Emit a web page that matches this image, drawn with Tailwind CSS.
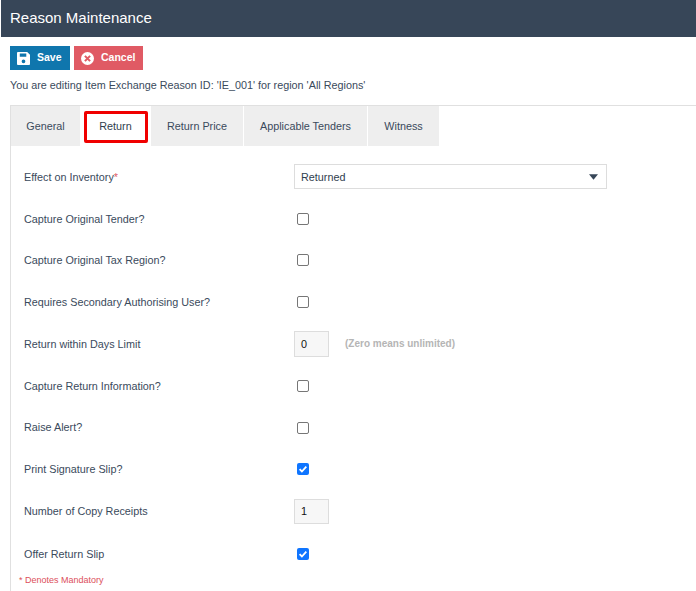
<!DOCTYPE html>
<html lang="en">
<head>
  <meta charset="UTF-8" />
  <title>Reason Maintenance</title>
  <script src="https://cdn.jsdelivr.net/npm/@tailwindcss/browser@4"></script>
</head>
<body class="bg-white text-[#3a4a5c] font-['Liberation_Sans',Arial,sans-serif] h-[591px] overflow-hidden">

  <header class="h-[37px] ml-px bg-[#374658] text-white text-[15px] flex items-center pl-[9px]">Reason Maintenance</header>

  <div class="flex gap-1 pl-[10px] mt-[9px]">
    <button class="h-6 w-[60px] bg-[#0f76ad] text-white text-[10.5px] font-bold flex items-center pl-[7px] gap-[7px]">
      <svg class="w-[13px] h-[13px]" viewBox="0 0 14 14"><path fill="#fff" fill-rule="evenodd" d="M1 0h10l3 3v10a1 1 0 0 1-1 1H1a1 1 0 0 1-1-1V1a1 1 0 0 1 1-1zM3 1.5V5h7V1.5zM7 8a2 2 0 1 0 0 4 2 2 0 0 0 0-4z"/></svg>
      Save
    </button>
    <button class="h-6 w-[69px] bg-[#e05a64] text-white text-[10.5px] font-bold flex items-center pl-[7px] gap-[7px]">
      <svg class="w-[13px] h-[13px]" viewBox="0 0 14 14"><circle cx="7" cy="7" r="7" fill="#fff"/><path d="M4.2 4.2l5.6 5.6M9.8 4.2l-5.6 5.6" stroke="#e05a64" stroke-width="2.2"/></svg>
      Cancel
    </button>
  </div>

  <p class="text-[10.8px] mt-2 ml-[10px] h-[14px] leading-[14px] whitespace-nowrap">You are editing Item Exchange Reason ID: 'IE_001' for region 'All Regions'</p>

  <div class="ml-[10px] mt-[13px] border-t border-l border-[#e0e0e0] h-[486px]">
    <nav class="flex gap-px text-[10.8px] h-10">
      <a class="w-[69px] bg-[#eeeeee] flex items-center justify-center">General</a>
      <a class="relative w-[69px] bg-white text-[#2f3e4e] flex items-center justify-center">
        Return
        <span class="absolute left-[3px] top-[5px] w-[64px] h-[32px] border-[3px] border-[#f00000] rounded-[2px]"></span>
      </a>
      <a class="w-[92px] bg-[#eeeeee] flex items-center justify-center">Return Price</a>
      <a class="w-[123px] bg-[#eeeeee] flex items-center justify-center">Applicable Tenders</a>
      <a class="w-[71px] bg-[#eeeeee] flex items-center justify-center">Witness</a>
    </nav>

    <div class="pt-[10px] pl-[13px] text-[10.8px]">
      <div class="flex items-center h-[41.78px]">
        <label class="w-[270px]">Effect on Inventory<span class="text-[#e05a64]">*</span></label>
        <div class="w-[313px] h-[25px] border border-[#dddddd] flex items-center justify-between pl-[6px] pr-2 text-[#2f3e4e]">
          Returned
          <svg class="w-[9px] h-[6px]" viewBox="0 0 10 6"><path fill="#374658" d="M0 0h10L5 6z"/></svg>
        </div>
      </div>
      <div class="flex items-center h-[41.78px]">
        <label class="w-[273px]">Capture Original Tender?</label>
        <span class="w-3 h-3 border border-[#767676] rounded-[2px] bg-white"></span>
      </div>
      <div class="flex items-center h-[41.78px]">
        <label class="w-[273px]">Capture Original Tax Region?</label>
        <span class="w-3 h-3 border border-[#767676] rounded-[2px] bg-white"></span>
      </div>
      <div class="flex items-center h-[41.78px]">
        <label class="w-[273px]">Requires Secondary Authorising User?</label>
        <span class="w-3 h-3 border border-[#767676] rounded-[2px] bg-white"></span>
      </div>
      <div class="flex items-center h-[41.78px]">
        <label class="w-[270px]">Return within Days Limit</label>
        <div class="w-[35px] h-[26px] border border-[#dddddd] bg-[#f7f7f7] flex items-center pl-[6px] text-[#111111]">0</div>
        <span class="ml-4 text-[10px] font-bold text-[#b5b5b5]">(Zero means unlimited)</span>
      </div>
      <div class="flex items-center h-[42px]">
        <label class="w-[273px]">Capture Return Information?</label>
        <span class="w-3 h-3 border border-[#767676] rounded-[2px] bg-white"></span>
      </div>
      <div class="flex items-center h-[41.5px]">
        <label class="w-[273px]">Raise Alert?</label>
        <span class="w-3 h-3 border border-[#767676] rounded-[2px] bg-white"></span>
      </div>
      <div class="flex items-center h-[41.78px]">
        <label class="w-[273px]">Print Signature Slip?</label>
        <svg class="w-3 h-3" viewBox="0 0 12 12"><rect width="12" height="12" rx="2" fill="#0f75ff"/><path d="M2.6 6.2l2.3 2.3 4.4-4.8" fill="none" stroke="#fff" stroke-width="1.8"/></svg>
      </div>
      <div class="flex items-center h-[42.5px]">
        <label class="w-[270px]">Number of Copy Receipts</label>
        <div class="w-[35px] h-[25px] border border-[#dddddd] bg-[#f7f7f7] flex items-center pl-[6px] text-[#111111]">1</div>
      </div>
      <div class="flex items-center h-[43px]">
        <label class="w-[273px]">Offer Return Slip</label>
        <svg class="w-3 h-3" viewBox="0 0 12 12"><rect width="12" height="12" rx="2" fill="#0f75ff"/><path d="M2.6 6.2l2.3 2.3 4.4-4.8" fill="none" stroke="#fff" stroke-width="1.8"/></svg>
      </div>
      <p class="text-[9px] text-[#dc4f5b] -ml-[5px] -mt-[2px]">* Denotes Mandatory</p>
    </div>
  </div>

</body>
</html>
